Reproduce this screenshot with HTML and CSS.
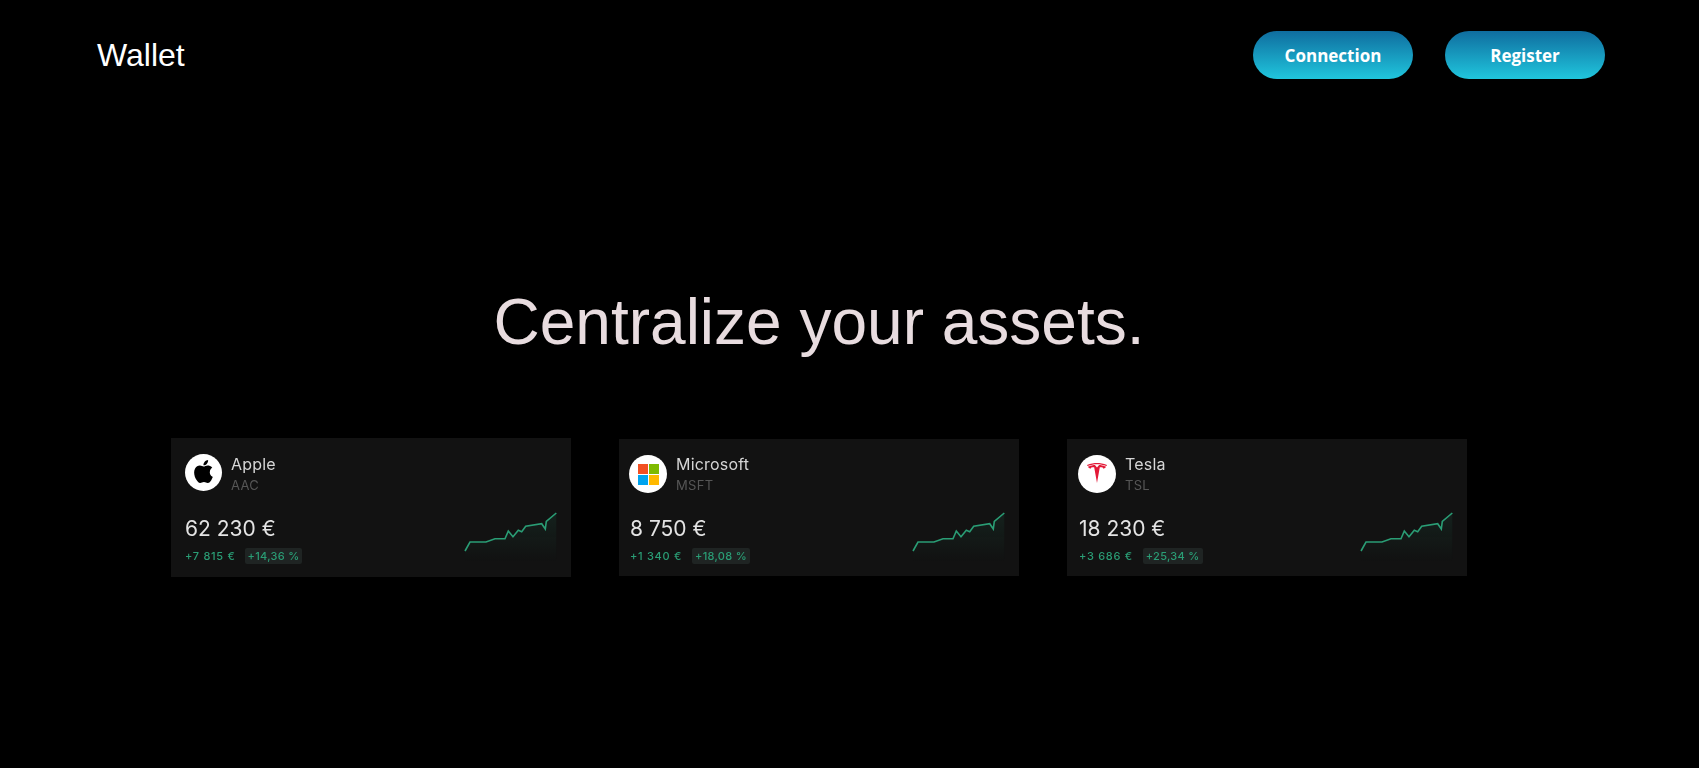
FILE: index.html
```html
<!DOCTYPE html>
<html lang="en">
<head>
  <meta charset="UTF-8">
  <title>Wallet</title>
  <link rel="stylesheet" href="styles.css">
</head>
<body>

  <svg class="defs" width="0" height="0">
    <defs>
      <linearGradient id="spark-fill" x1="0" y1="0" x2="0" y2="1">
        <stop offset="0" stop-color="#2a9d75" stop-opacity="0.11"/>
        <stop offset="1" stop-color="#2a9d75" stop-opacity="0"/>
      </linearGradient>
      <symbol id="spark" viewBox="0 0 94 52">
        <path d="M1 41L6 32H22L31 28.7H41L44.3 21L49 26.7L54.3 20.3L57.7 21.7L61.7 16.3L77.7 13.7L81.3 19L82.3 11.3L92.3 3V52H1Z" fill="url(#spark-fill)"/>
        <path d="M1 41L6 32H22L31 28.7H41L44.3 21L49 26.7L54.3 20.3L57.7 21.7L61.7 16.3L77.7 13.7L81.3 19L82.3 11.3L92.3 3" fill="none" stroke="#2a9d75" stroke-width="1.6"/>
      </symbol>
    </defs>
  </svg>

  <header class="topbar">
    <div class="brand">Wallet</div>
    <nav class="actions">
      <button class="btn">Connection</button>
      <button class="btn">Register</button>
    </nav>
  </header>

  <main class="content">
    <h1 class="headline">Centralize your assets.</h1>

    <section class="cards">

      <article class="card card-apple">
        <div class="company">
          <div class="logo">
            <svg class="logo-apple" viewBox="0 0 24 24"><path d="M12.152 6.896c-.948 0-2.415-1.078-3.96-1.04-2.04.027-3.91 1.183-4.961 3.014-2.117 3.675-.546 9.103 1.519 12.09 1.013 1.454 2.208 3.09 3.792 3.039 1.52-.065 2.09-.987 3.935-.987 1.831 0 2.35.987 3.96.948 1.637-.026 2.676-1.48 3.676-2.948 1.156-1.688 1.636-3.325 1.662-3.415-.039-.013-3.182-1.221-3.22-4.857-.026-3.04 2.48-4.494 2.597-4.559-1.429-2.09-3.623-2.324-4.39-2.376-2-.156-3.675 1.09-4.61 1.09zM15.53 3.83c.843-1.012 1.4-2.427 1.245-3.83-1.207.052-2.662.805-3.532 1.818-.78.896-1.454 2.338-1.273 3.714 1.338.104 2.715-.688 3.559-1.701"/></svg>
          </div>
          <div>
            <div class="name">Apple</div>
            <div class="ticker">AAC</div>
          </div>
        </div>
        <div class="figures">
          <div>
            <div class="amount">62 230 €</div>
            <div class="stats"><span class="gain">+7 815 €</span><span class="pill">+14,36 %</span></div>
          </div>
          <svg class="spark"><use href="#spark"/></svg>
        </div>
      </article>

      <article class="card card-microsoft">
        <div class="company">
          <div class="logo">
            <svg class="logo-ms" viewBox="0 0 21 21">
              <rect width="10" height="10" fill="#f25022"/>
              <rect x="11" width="10" height="10" fill="#7fba00"/>
              <rect y="11" width="10" height="10" fill="#00a4ef"/>
              <rect x="11" y="11" width="10" height="10" fill="#ffb900"/>
            </svg>
          </div>
          <div class="labels">
            <div class="name">Microsoft</div>
            <div class="ticker">MSFT</div>
          </div>
        </div>
        <div class="figures">
          <div class="values">
            <div class="amount">8 750 €</div>
            <div class="stats"><span class="gain">+1 340 €</span><span class="pill">+18,08 %</span></div>
          </div>
          <svg class="spark"><use href="#spark"/></svg>
        </div>
      </article>

      <article class="card card-tesla">
        <div class="company">
          <div class="logo">
            <svg class="logo-tesla" viewBox="0 0 24 24"><path d="M12 5.362l2.475-3.026s4.245.09 8.471 2.054c-1.082 1.636-3.231 2.438-3.231 2.438-.146-1.439-1.154-1.79-4.354-1.79L12 24 8.619 5.034c-3.18 0-4.188.354-4.335 1.792 0 0-2.146-.795-3.229-2.43C5.28 2.431 9.525 2.34 9.525 2.34L12 5.362l-.002.002H12zm0-3.899c3.415-.03 7.326.528 11.328 2.28.535-.968.672-1.395.672-1.395C19.625.612 15.528.015 12 0 8.472.015 4.375.61 0 2.349c0 0 .195.525.672 1.396C4.674 1.989 8.585 1.435 12 1.46z"/></svg>
          </div>
          <div class="labels">
            <div class="name">Tesla</div>
            <div class="ticker">TSL</div>
          </div>
        </div>
        <div class="figures">
          <div class="values">
            <div class="amount">18 230 €</div>
            <div class="stats"><span class="gain">+3 686 €</span><span class="pill">+25,34 %</span></div>
          </div>
          <svg class="spark"><use href="#spark"/></svg>
        </div>
      </article>

    </section>
  </main>

</body>
</html>
```

FILE: styles.css
```css
html, body {
  height: 100%;
}

body {
  margin: 0;
  background: #000;
  color: #fff;
  font-family: "Liberation Sans", Arial, sans-serif;
  overflow: hidden;
}

.defs {
  display: block;
}

.topbar {
  display: flex;
  justify-content: space-between;
  align-items: center;
  padding: 31px 94px 0 97px;
}

.brand {
  font-size: 32px;
}

.actions {
  display: flex;
  gap: 32px;
}

.btn {
  width: 160px;
  height: 48px;
  border: none;
  border-radius: 24px;
  background: linear-gradient(#0f6d9f, #20c6dd);
  color: #fff;
  font-family: "Open Sans", sans-serif;
  font-size: 17px;
  font-weight: 700;
  cursor: pointer;
}

.content {
  width: 1296px;
  margin-left: 171px;
}

.headline {
  margin: 206px 0 79px;
  color: #e8dcdf;
  font-size: 64px;
  font-weight: 400;
  text-align: center;
}

.cards {
  display: grid;
  grid-template-columns: repeat(3, 400px);
  gap: 48px;
  align-items: center;
}

.card {
  display: flex;
  flex-direction: column;
  justify-content: space-between;
  box-sizing: border-box;
  height: 137px;
  padding: 16px 13px 12px 10px;
  background: #121212;
  font-family: Inter, sans-serif;
}

.card > * {
  filter: blur(0.5px);
}

.card-apple {
  height: 139px;
  padding: 16px 13px 13px 14px;
}

.card-tesla {
  padding-left: 11px;
}

.company {
  display: flex;
  gap: 9px;
}

.labels {
  margin-top: -1px;
}

.values {
  margin-left: 1px;
}

.logo {
  display: flex;
  justify-content: center;
  align-items: center;
  flex: none;
  width: 38px;
  height: 38px;
  border-radius: 50%;
  background: #fff;
}

.card-apple .logo {
  width: 37px;
  height: 37px;
}

.logo-apple {
  width: 23px;
  height: 23px;
  margin-top: -2px;
  fill: #000;
}

.logo-ms {
  width: 21px;
  height: 21px;
}

.logo-tesla {
  width: 20px;
  height: 20px;
  margin-top: -3px;
  fill: #e31937;
}

.name {
  color: #d6d6d6;
  font-size: 16px;
  line-height: 20px;
  letter-spacing: 0.2px;
}

.ticker {
  margin-top: 3px;
  color: #565656;
  font-size: 13px;
  line-height: 16px;
  letter-spacing: 0.3px;
}

.figures {
  display: flex;
  justify-content: space-between;
  align-items: flex-end;
}

.amount {
  color: #e4e4e4;
  font-size: 21px;
  line-height: 26px;
}

.stats {
  display: flex;
  align-items: center;
  gap: 10px;
  margin-top: 6px;
  color: #2a9d75;
  font-size: 11px;
  font-weight: 500;
  line-height: 16px;
}

.card-apple .stats {
  gap: 9px;
}

.gain {
  letter-spacing: 0.7px;
}

.pill {
  padding: 0 3px;
  border-radius: 2px;
  background: #1f2423;
  letter-spacing: 0.3px;
}

.spark {
  width: 94px;
  height: 52px;
  margin-bottom: 2px;
}
```
